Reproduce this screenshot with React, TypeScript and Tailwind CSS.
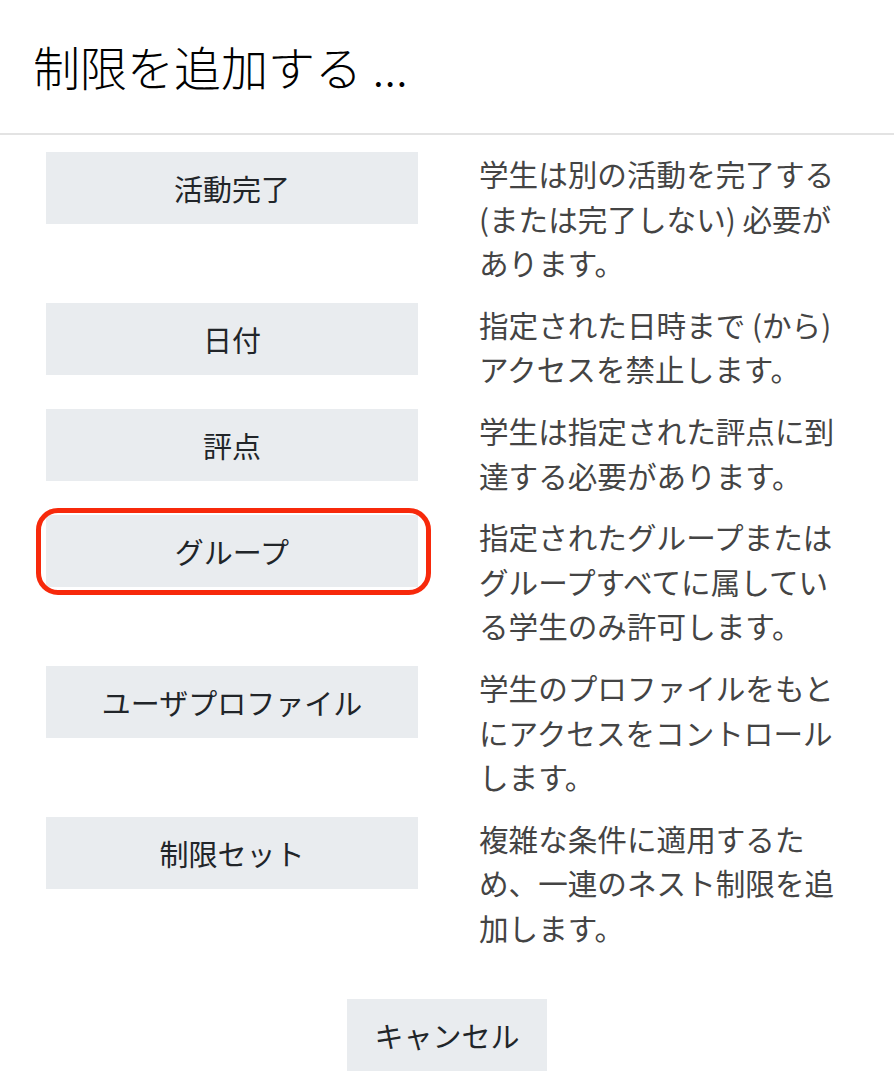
const rows = [
  { label: "活動完了", text: "学生は別の活動を完了する (または完了しない) 必要があります。" },
  { label: "日付", text: "指定された日時まで (から) アクセスを禁止します。" },
  { label: "評点", text: "学生は指定された評点に到達する必要があります。" },
  { label: "グループ", text: "指定されたグループまたはグループすべてに属している学生のみ許可します。", marked: true },
  { label: "ユーザプロファイル", text: "学生のプロファイルをもとにアクセスをコントロールします。" },
  { label: "制限セット", text: "複雑な条件に適用するため、一連のネスト制限を追加します。" },
];

export default function App() {
  return (
    <div
      className="min-h-[1084px] w-[894px] bg-white text-[#212529]"
      style={{ fontFamily: '"Noto Sans CJK JP", "Noto Sans", sans-serif' }}
    >
      <div className="border-b-2 border-[#e3e3e3] pl-[33px] pt-[38px] pb-[40px]">
        <h1 className="text-[47px] leading-[55px] font-light text-black">制限を追加する ...</h1>
      </div>

      <div className="flex flex-col gap-[17px] pt-[17px]">
        {rows.map((r) => (
          <div key={r.label} className="grid grid-cols-[372px_370px] gap-[61px] pl-[46px]">
            <div className="relative h-[72px]">
              <button className="flex h-[72px] w-full items-center justify-center bg-[#e9ecef] text-[29px] leading-[44px] text-[#212529]">
                {r.label}
              </button>
              {r.marked && (
                <div className="pointer-events-none absolute -left-[10px] -right-[13px] -top-[7px] -bottom-[8px] rounded-[22px] border-[5px] border-[#f7290b]" />
              )}
            </div>
            <p className="text-[29.6px] leading-[44.6px] text-[#444]">{r.text}</p>
          </div>
        ))}
      </div>

      <div className="flex justify-center pt-[48px]">
        <button className="h-[72px] w-[200px] bg-[#e9ecef] text-[29px] leading-[44px] text-[#212529]">
          キャンセル
        </button>
      </div>
    </div>
  );
}
